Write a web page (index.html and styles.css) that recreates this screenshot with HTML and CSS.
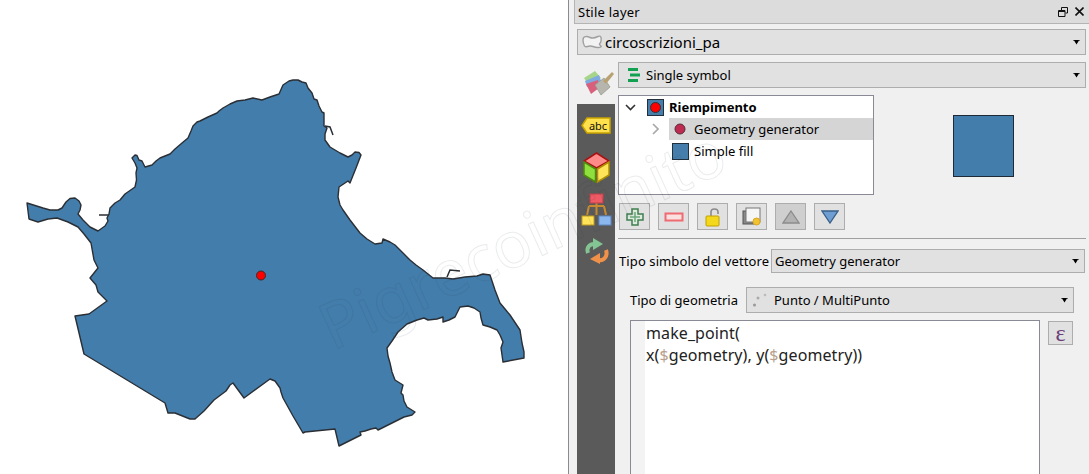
FILE: index.html
```html
<!DOCTYPE html>
<html lang="it">
<head>
<meta charset="utf-8">
<title>Stile layer</title>
<link rel="stylesheet" href="styles.css">
</head>
<body>
<div class="app">
  <div class="map">
    <svg class="map-svg" width="568" height="474" viewBox="0 0 568 474">
      <path class="land" d="M27 203 L43 208 L50 210 L58 210 L62 208 L66 202 L70 198.500 L75 198 L79 201 L81 205 L80 210 L78 214 L83 220 L90 227 L94 229 L98 231 L105 226 L108 221 L107 218 L109 214 L110 208 L115 203 L120 200 L125 194 L135 187 L136.500 180 L136 173 L137 168 L135 163 L132 158 L135 155 L137 155.500 L139 160 L142 161 L145 167 L152 165 L156 161 L160 158 L170 154 L175 149 L182 143 L188 138 L191 131 L193 126 L197 122 L200 121 L208 117 L217 113 L219 111 L223 108 L230 104 L237 101 L245 100 L253 98 L262 100 L270 97 L279 94 L283 85 L289 81 L293 80 L298 80 L302 82 L306 83 L308 88 L312 93 L314 99 L317 100 L319 106 L322 112 L324 113 L324 126 L327 128 L325 134 L325 140 L330 147 L340 153 L348 157 L352 155 L355 152 L359 152.500 L361 155 L356 168 L350 183 L348 181 L345 183 L339 187 L338 197 L340 205 L343 210 L350 220 L360 233 L367 239 L375 244 L382 243 L383 239 L390 242 L395 245 L402 252 L410 260 L416 265 L423 270 L433 278 L445 278 L453 279 L465 277 L477 276 L483 274 L490 275 L495 290 L500 303 L505 309 L510 315 L520 330 L522 343 L524 352 L524 358 L503 362 L501 348 L503 342 L500 335 L497 330 L490 327 L483 325 L481 318 L480 312 L474 308 L468 306 L460 307 L457 313 L455 317 L449 320 L443 322 L443 317 L437 319 L428 320 L424 318 L417 320 L407 324 L398 332 L392 341 L387 348 L388 356 L390 363 L392 372 L395 380 L403 385 L401 393 L403 395 L404 401 L407 407 L415 412 L412 415 L404 417 L378 430 L376 428 L371 429 L365 431 L360 432 L361 435 L339 446 L335 429 L305 432 L303 433 L293 416 L283 398 L281 392 L280 388 L275 381 L270 379 L244 398 L233 383 L230 385 L226 391 L214 400 L204 411 L195 419 L190 419 L175 413 L168 413 L165 403 L84 354 L75 316 L89 314 L107 301 L98 292 L96 285 L90 278 L98 268 L94 260 L91 243 L84 234 L78 227 L68 222 L57 218 L48 219 L38 222 L29 219 Z"/>
      <path class="spur" d="M99 215 L108 215 M325 126 L330 127 L333 135 M447 277 L450 270 L460 271"/>
      <circle class="dot" cx="261" cy="275.500" r="4.500"/>
    </svg>
  </div>
  <aside class="panel">
    <header class="title">
      <span class="title-text">Stile layer</span>
      <svg class="title-icon" width="10" height="10" viewBox="0 0 10 10"><path d="M3.500 .5h6v5.500h-2M3.500 3V.5M.5 3.500h6.500v6h-6.500zM.5 4.500h6.500" fill="none" stroke="#111"/></svg>
      <svg class="title-icon" width="9" height="9" viewBox="0 0 9 9"><path d="M.5 .5L8.500 8.500M8.500 .5L.5 8.500" stroke="#111" stroke-width="1.600"/></svg>
    </header>
    <div class="combo combo-layer">
      <svg class="ic-poly" width="20" height="14" viewBox="0 0 20 14"><path d="M1 5C1 1 5 1 8 2.500S13 3 16 1.500S19.500 3 19 6S16 9 18.500 10.500S16 13.500 11 11.500S4 13.500 2.500 11S1 8 1 5Z" fill="#f2f2f2" stroke="#a0a0a0" stroke-width="1.400"/></svg>
      <span class="layer-name">circoscrizioni_pa</span>
    </div>
    <div class="body">
      <div class="side">
        <svg class="ic-paint" width="30" height="26" viewBox="0 0 30 26">
          <path d="M0 8L11 1L17 8L4 14Z" fill="#a6d58a"/><path d="M1 11L15 5L17 11L3 17Z" fill="#7faae0"/><path d="M2 14L14 10L15 18L7 24Z" fill="#d9607c"/>
          <path d="M11 15L20 8L26 17L17 25Z" fill="#b6b6ae" stroke="#9a9a8e" stroke-width=".8"/><path d="M19 11L28 2L30 4L22 14Z" fill="#b8a272"/>
        </svg>
        <nav class="rail">
          <svg class="r-abc" width="30" height="17" viewBox="0 0 30 17"><path d="M1 8.500L6 1H29V16H6Z" fill="#ffe14d" stroke="#c9a400" stroke-width="1.500"/><text x="17" y="12.500" class="abc">abc</text></svg>
          <svg class="r-cube" width="27" height="31" viewBox="0 0 27 31"><path d="M13.500 1L26 9L13.500 16L1 9Z" fill="#ff8a8a" stroke="#a81212" stroke-width="1.500"/><path d="M1 10L12.500 17V30L1 23Z" fill="#8fe03c" stroke="#4f8a10" stroke-width="1.500"/><path d="M26 10L14.500 17V30L26 23Z" fill="#ffe45a" stroke="#b09000" stroke-width="1.500"/></svg>
          <svg class="r-tree" width="31" height="33" viewBox="0 0 31 33"><path d="M8 13H23M8 13L6 22M15.500 10V22M23 13L25 22" fill="none" stroke="#c88a30" stroke-width="2"/><rect x="9" y="1" width="13" height="9" fill="#f05a64" stroke="#c04048"/><rect x="1" y="23" width="12" height="9" fill="#ffe45a" stroke="#c09a20"/><rect x="18" y="23" width="12" height="9" fill="#8ab8ee" stroke="#5f88c0"/></svg>
          <svg class="r-undo" width="26" height="26" viewBox="0 0 26 26"><path d="M5 15C3 9 7 6 11 6" fill="none" stroke="#84c492" stroke-width="4"/><path d="M10 0L20 6L10 12Z" fill="#84c492"/><path d="M23 12C25 18 21 23 16 22" fill="none" stroke="#f0914a" stroke-width="4"/><path d="M17 15L7 21L17 26Z" fill="#f0914a"/></svg>
        </nav>
      </div>
      <div class="main">
        <div class="combo combo-renderer">
          <svg class="ic-bars" width="14" height="14" viewBox="0 0 14 14"><path d="M1 0h10v3h-10zM3 5.500h10v3h-10zM1 11h10v3h-10z" fill="#12a150"/></svg>
          <span>Single symbol</span>
        </div>
        <div class="top">
          <div class="tree">
            <div class="row">
              <svg class="chev" width="11" height="7" viewBox="0 0 11 7"><path d="M1 1L5.500 5.500L10 1" fill="none" stroke="#333" stroke-width="1.600"/></svg>
              <svg class="sym-root" width="17" height="17" viewBox="0 0 17 17"><rect x=".5" y=".5" width="16" height="16" fill="#457eab" stroke="#22303c"/><circle cx="8.500" cy="8.500" r="5" fill="#f00" stroke="#333"/></svg>
              <b>Riempimento</b>
            </div>
            <div class="row row-sel">
              <svg class="chev-r" width="7" height="12" viewBox="0 0 7 12"><path d="M1 1L6 6L1 11" fill="none" stroke="#a8a8a8" stroke-width="1.600"/></svg>
              <div class="sel">
                <svg class="sym-dot" width="12" height="12" viewBox="0 0 12 12"><circle cx="6" cy="6" r="5" fill="#bd2c50" stroke="#5a2a3a"/></svg>
                <span>Geometry generator</span>
              </div>
            </div>
            <div class="row row-fill">
              <svg class="sym-fill" width="17" height="17" viewBox="0 0 17 17"><rect x=".5" y=".5" width="16" height="16" fill="#457eab" stroke="#22303c"/></svg>
              <span>Simple fill</span>
            </div>
          </div>
          <div class="preview"></div>
        </div>
        <div class="tools">
          <button class="tool"><svg width="20" height="20" viewBox="0 0 20 20"><path d="M7 2h6v5h5v6h-5v5H7v-5H2V7h5z" fill="#e0ebe0" stroke="#3f7f4f" stroke-width="1.500"/><path d="M10 5v10M5 10h10" stroke="#6aa87a" stroke-width="1.500"/></svg></button>
          <button class="tool"><svg width="20" height="10" viewBox="0 0 20 10"><rect x="1.500" y="1.500" width="17" height="7" fill="#fbe0e0" stroke="#f06a72" stroke-width="2"/></svg></button>
          <button class="tool"><svg width="16" height="20" viewBox="0 0 16 20"><path d="M6 9V5C6 1 13 1 13 5V7" fill="none" stroke="#8a8a8a" stroke-width="1.600"/><rect x="1" y="9" width="13" height="10" rx="1" fill="#f4d81e" stroke="#c0a000"/></svg></button>
          <button class="tool"><svg width="20" height="20" viewBox="0 0 20 20"><rect x="1" y="4" width="13" height="13" fill="#8a8a8a" stroke="#555"/><rect x="4" y="1" width="14" height="14" fill="#f6f6f6" stroke="#777"/><circle cx="14.500" cy="14.500" r="3.500" fill="#f2c230" stroke="#d8a820"/></svg></button>
          <button class="tool tool-off"><svg width="18" height="14" viewBox="0 0 18 14"><path d="M9 1L17 13H1Z" fill="#b2b2b2" stroke="#8c8c8c" stroke-width="1.300"/></svg></button>
          <button class="tool"><svg width="18" height="14" viewBox="0 0 18 14"><path d="M1 1H17L9 13Z" fill="#6f9fd2" stroke="#3a5f88" stroke-width="1.300"/></svg></button>
        </div>
        <hr class="sep">
        <div class="form-row form-type">
          <label class="lab-sym">Tipo simbolo del vettore</label>
          <div class="combo combo-type"><span>Geometry generator</span></div>
        </div>
        <div class="sub">
          <div class="form-row form-geom">
            <label class="lab-geom">Tipo di geometria</label>
            <div class="combo combo-geom">
              <svg class="ic-pts" width="16" height="16" viewBox="0 0 16 16"><circle cx="2.500" cy="13" r="1.500" fill="#999"/><circle cx="6" cy="6" r="1.500" fill="#aaa"/><circle cx="13" cy="3" r="1.300" fill="#bbb"/></svg>
              <span>Punto / MultiPunto</span>
            </div>
          </div>
          <div class="expr">
            <div class="editor">
              <div class="gutter"></div>
              <pre class="code">make_point(
x(<i>$</i>geometry), y(<i>$</i>geometry))</pre>
            </div>
            <button class="eps">&#949;</button>
          </div>
        </div>
      </div>
    </div>
  </aside>
  <div class="mark">Pigrecoinfinito</div>
</div>
</body>
</html>
```
FILE: styles.css
```css
* { box-sizing: border-box; }
html, body { margin: 0; height: 100%; overflow: hidden; }
body { font: 13px "Noto Sans", "Open Sans", sans-serif; color: #000; background: #fff; }
.app { display: flex; width: 1089px; height: 474px; position: relative; overflow: hidden; }
.map { width: 568px; height: 474px; background: #fff; flex: none; }
.map-svg { display: block; }
.land { fill: #437dab; stroke: #2a2f35; stroke-width: 1.400; stroke-linejoin: round; }
.spur { fill: none; stroke: #2a2f35; stroke-width: 1.500; }
.dot { fill: #f00; stroke: #3a2a2a; stroke-width: 1; }
.panel { flex: none; width: 521px; height: 474px; background: #f0f0f0; border-left: 1px solid #8a8a96; padding-left: 5px; }
.title { height: 24px; background: #dcdcdc; border-left: 1px solid #b4b4b4; border-bottom: 1px solid #b4b4b4; display: flex; align-items: center; padding: 0 5px 0 3px; gap: 7px; }
.title-text { flex: 1; letter-spacing: .25px; }
.title-icon { display: block; }
.combo { height: 26px; background: #e1e1e1; border: 1px solid #adadad; display: flex; align-items: center; white-space: nowrap; }
.combo::after { content: ""; margin-left: auto; margin-right: 5px; width: 7px; height: 5px; background: #000; clip-path: polygon(0 0, 100% 0, 100% 20%, 85% 20%, 50% 100%, 15% 20%, 0 20%); }
.combo-layer { margin: 5px 3px 0 3px; padding-left: 4px; }
.layer-name { font-size: 15px; }
.ic-poly { margin-right: 3px; }
.body { display: flex; margin-top: 7px; padding-left: 3px; }
.side { width: 38px; flex: none; }
.ic-paint { display: block; margin: 8px 0 0 7px; }
.rail { margin-top: 8px; width: 38px; height: 370px; background: #5a5a5a; display: flex; flex-direction: column; align-items: center; padding-top: 13px; }
.rail svg { display: block; flex: none; }
.r-cube { margin-top: 18px; }
.r-tree { margin-top: 10px; }
.r-undo { margin-top: 12px; }
.abc { font: 11px "Noto Sans", sans-serif; fill: #111; text-anchor: middle; }
.main { margin-left: 3px; width: 468px; flex: none; }
.combo-renderer { padding-left: 8px; }
.ic-bars { margin-right: 5px; }
.top { display: flex; margin-top: 7px; }
.tree { width: 256px; height: 100px; background: #fff; border: 1px solid #8a8a96; flex: none; }
.row { height: 22px; display: flex; align-items: center; }
.row b { margin-left: 5px; }
.chev { margin-left: 6px; }
.sym-root { margin-left: 11px; }
.row-sel { padding-left: 33px; }
.chev-r { margin-right: 10px; }
.sel { flex: 1; height: 22px; background: #d5d5d5; display: flex; align-items: center; padding-left: 5px; }
.sym-dot { margin-right: 8px; }
.row-fill { padding-left: 53px; }
.sym-fill { margin-right: 5px; }
.preview { width: 61px; height: 62px; margin: 20px 0 0 79px; background: #437dab; border: 1px solid #1e2a36; }
.tools { display: flex; gap: 8px; margin: 8px 0 0 1px; }
.tool { width: 31px; height: 27px; padding: 0; background: #e1e1e1; border: 1px solid #adadad; display: flex; align-items: center; justify-content: center; }
.tool-off { background: #cfcfcf; }
.sep { height: 1px; margin: 8px 0 0; border: 0; background: #a0a0a0; }
.form-row { display: flex; align-items: center; }
.form-type { margin-top: 10px; }
.lab-sym { width: 153px; padding-left: 1px; white-space: nowrap; letter-spacing: .1px; }
.combo-type { width: 314px; height: 24px; padding-left: 3px; }
.sub { padding-left: 12px; }
.form-geom { margin-top: 14px; }
.lab-geom { width: 116px; white-space: nowrap; }
.combo-geom { width: 328px; height: 26px; padding-left: 5px; }
.ic-pts { margin-right: 6px; }
.expr { display: flex; margin-top: 7px; align-items: flex-start; }
.editor { width: 410px; height: 200px; background: #fff; border: 1px solid #8a8a96; border-width: 1px 1px 0 1px; display: flex; }
.gutter { width: 14px; background: #f3f3f3; }
.code { margin: 0; padding: 1px 0 0 1px; font: 16px/22px "Noto Sans", "Open Sans", sans-serif; letter-spacing: .1px; color: #222; }
.code i { font-style: normal; color: #b8a08e; }
.eps { margin: 1px 0 0 8px; width: 25px; height: 24px; padding: 0; background: #e1e1e1; border: 1px solid #adadad; font: 24px/20px "Liberation Serif", serif; color: #6a3d78; }
.mark { position: absolute; left: 333px; top: 295px; font: 64px/64px "Noto Sans", sans-serif; color: transparent; -webkit-text-stroke: 1px rgba(50, 60, 80, .1); transform: rotate(-24.500deg); transform-origin: 0 57px; white-space: nowrap; pointer-events: none; }
```
